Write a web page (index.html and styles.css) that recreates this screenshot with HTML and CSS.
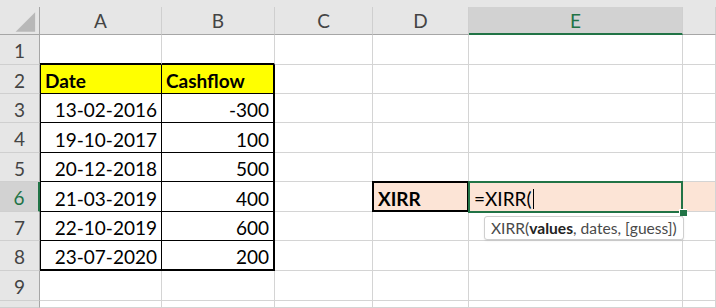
FILE: index.html
```html
<!DOCTYPE html>
<html lang="en">
<head>
    <meta charset="UTF-8">
    <title>XIRR</title>
    <link rel="stylesheet" href="styles.css">
</head>
<body>

    <div class="sheet">
        <!-- column headers -->
        <div class="hd corner">
            <svg width="40" height="28" viewBox="0 0 40 28"><polygon points="36,5 36,25 16,25" fill="#b8b8b8"/></svg>
        </div>
        <div class="hd">A</div>
        <div class="hd">B</div>
        <div class="hd">C</div>
        <div class="hd">D</div>
        <div class="hd hd-sel">E</div>
        <div class="hd"></div>

        <!-- row 1 -->
        <div class="rh">1</div>
        <div class="c top-edge"></div>
        <div class="c top-edge"></div>
        <div class="c"></div>
        <div class="c"></div>
        <div class="c"></div>
        <div class="c"></div>

        <!-- row 2 -->
        <div class="rh">2</div>
        <div class="c tb col-a yellow bold">Date</div>
        <div class="c tb col-b yellow bold">Cashflow</div>
        <div class="c"></div>
        <div class="c"></div>
        <div class="c"></div>
        <div class="c"></div>

        <!-- row 3 -->
        <div class="rh">3</div>
        <div class="c tb col-a num">13-02-2016</div>
        <div class="c tb col-b num">-300</div>
        <div class="c"></div>
        <div class="c"></div>
        <div class="c"></div>
        <div class="c"></div>

        <!-- row 4 -->
        <div class="rh">4</div>
        <div class="c tb col-a num">19-10-2017</div>
        <div class="c tb col-b num">100</div>
        <div class="c"></div>
        <div class="c"></div>
        <div class="c"></div>
        <div class="c"></div>

        <!-- row 5 -->
        <div class="rh">5</div>
        <div class="c tb col-a num">20-12-2018</div>
        <div class="c tb col-b num">500</div>
        <div class="c"></div>
        <div class="c"></div>
        <div class="c"></div>
        <div class="c"></div>

        <!-- row 6 -->
        <div class="rh rh-sel">6</div>
        <div class="c tb col-a num">21-03-2019</div>
        <div class="c tb col-b num">400</div>
        <div class="c"></div>
        <div class="c label bold">XIRR</div>
        <div class="c editing">
            =XIRR(<span class="caret"></span>
            <div class="hint">XIRR(<b>values</b>, dates, [guess])</div>
        </div>
        <div class="c peach"></div>

        <!-- row 7 -->
        <div class="rh">7</div>
        <div class="c tb col-a num">22-10-2019</div>
        <div class="c tb col-b num">600</div>
        <div class="c"></div>
        <div class="c"></div>
        <div class="c"></div>
        <div class="c"></div>

        <!-- row 8 -->
        <div class="rh">8</div>
        <div class="c tb col-a num last">23-07-2020</div>
        <div class="c tb col-b num last">200</div>
        <div class="c"></div>
        <div class="c"></div>
        <div class="c"></div>
        <div class="c"></div>

        <!-- row 9 -->
        <div class="rh">9</div>
        <div class="c"></div>
        <div class="c"></div>
        <div class="c"></div>
        <div class="c"></div>
        <div class="c"></div>
        <div class="c"></div>

        <!-- row 10, cut off -->
        <div class="rh"></div>
        <div class="c"></div>
        <div class="c"></div>
        <div class="c"></div>
        <div class="c"></div>
        <div class="c"></div>
        <div class="c"></div>
    </div>

</body>
</html>
```

FILE: styles.css
```css
* {
    box-sizing: border-box;
}

body {
    margin: 0;
    background-color: #fff;
    font-family: "Lato", "DejaVu Sans", sans-serif;
    font-size: 19px;
    color: #000;
    overflow: hidden;
}

.sheet {
    display: grid;
    grid-template-columns: 40px 122px 113px 98px 96px 214px 33px;
    grid-template-rows: 28px 30px 29px 29px 30px 29px 30px 29px 30px 30px 7px;
    padding-top: 7px;
    background: linear-gradient(#e6e6e6 35px, #fff 35px);
}

/* headers */
.hd {
    display: flex;
    align-items: center;
    justify-content: center;
    background-color: #e6e6e6;
    color: #444;
    border-right: 1px solid #cfcfcf;
    border-bottom: 1px solid #a6a6a6;
}

.hd.corner {
    border-right: 1px solid #a6a6a6;
}

.hd-sel {
    background-color: #d2d2d2;
    color: #217346;
    border-bottom: 2px solid #217346;
}

.rh {
    display: flex;
    align-items: center;
    justify-content: center;
    background-color: #e6e6e6;
    color: #444;
    border-right: 1px solid #a6a6a6;
    border-bottom: 1px solid #cfcfcf;
    padding-top: 2px;
}

.rh-sel {
    background-color: #d2d2d2;
    color: #217346;
    border-right: 2px solid #217346;
}

/* cells */
.c {
    display: flex;
    align-items: center;
    padding: 3px 4px 0;
    border-right: 1px solid #d4d4d4;
    border-bottom: 1px solid #d4d4d4;
    white-space: nowrap;
}

.bold {
    font-weight: bold;
}

.num {
    justify-content: flex-end;
}

.yellow {
    background-color: #ffff00;
}

.top-edge {
    border-bottom: 2px solid #000;
}

.tb {
    border-bottom: 1px solid #000;
}

.col-a {
    border-left: 1px solid #000;
    border-right: 1px solid #000;
}

.col-b {
    border-right: 2px solid #000;
}

.tb.last {
    border-bottom: 2px solid #000;
}

.label {
    background-color: #fce4d6;
    border: 2px solid #000;
    margin: -1px 0 0 -1px;
}

.peach {
    background-color: #fce4d6;
}

.editing {
    position: relative;
    background-color: #fce4d6;
    border: none;
    padding-left: 5px;
}

.editing::after {
    content: "";
    position: absolute;
    top: -1px;
    left: -1px;
    right: 0;
    bottom: -1px;
    border: 2px solid #217346;
}

.editing::before {
    content: "";
    position: absolute;
    right: -4px;
    bottom: -4px;
    width: 7px;
    height: 6px;
    background-color: #217346;
    border-left: 1px solid #fff;
    border-top: 1px solid #fff;
    z-index: 2;
}

.caret {
    display: inline-block;
    width: 1px;
    height: 20px;
    margin-left: 1px;
    background-color: #000;
}

.hint {
    position: absolute;
    left: 15px;
    top: 34px;
    height: 24px;
    padding: 0 6px;
    display: flex;
    align-items: center;
    font-size: 15.6px;
    color: #4a4a4a;
    background-color: #fff;
    border: 1px solid #cfcfcf;
    border-radius: 3px;
    box-shadow: 0 1px 2px rgba(0, 0, 0, 0.08);
    z-index: 3;
}

.hint b {
    color: #222;
}
```
